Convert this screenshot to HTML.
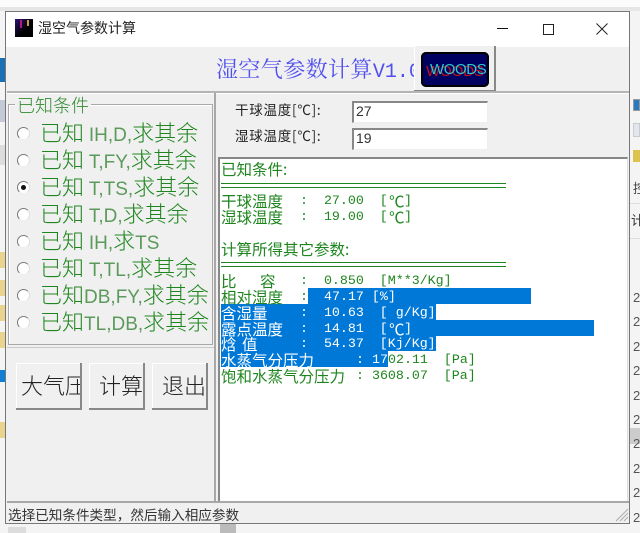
<!DOCTYPE html>
<html><head><meta charset="utf-8"><style>
*{box-sizing:border-box}
html,body{margin:0;padding:0}
body{width:640px;height:533px;position:relative;overflow:hidden;background:#f4f4f4;font-family:"Liberation Sans","Noto Sans CJK SC",sans-serif}
.a{position:absolute}
.t{position:absolute;white-space:pre;line-height:1}
.r{position:absolute;left:17px;width:13px;height:13px;border-radius:50%;background:#fff;border:1.5px solid;border-color:#777 #ddd #eee #777}
.rl{position:absolute;left:40px;white-space:pre;height:24px;line-height:24px;margin-top:-1px;color:#1f861f;font-size:22px;font-family:"Noto Sans CJK SC",sans-serif;font-weight:300}
.rl i{font-style:normal;font-family:"Liberation Sans",sans-serif;font-size:19px;color:#5c9a5c}
.btn{position:absolute;top:363px;height:47px;background:#f0f0f0;border-right:2px solid #888;border-bottom:2px solid #888;box-shadow:inset 1px 1px 0 #fff;overflow:hidden;color:#222;font-size:22px;font-family:"Noto Sans CJK SC",sans-serif;font-weight:300;line-height:45px;white-space:pre}
.l{position:absolute;color:#1f861f;font-size:15.5px;line-height:16px;white-space:pre;font-family:"Noto Sans CJK SC",sans-serif;font-weight:400}
.m{position:absolute;font-family:"Liberation Mono",monospace;font-size:13.3px;line-height:16px;white-space:pre;color:#1f861f}
.w{color:#fff}
.sel{position:absolute;background:#0078d7}
.in{position:absolute;left:352px;width:136px;height:22px;background:#fff;border-top:2px solid #888;border-left:2px solid #888;border-right:1px solid #eee;border-bottom:1px solid #eee;font-size:14px;color:#333;line-height:17px;padding-left:2px}
</style></head><body>
<div class="a" style="left:0;top:0;width:640px;height:11px;background:#fbfbfb"></div>
<div class="a" style="left:0;top:7px;width:640px;height:4px;background:#e6e6e6"></div>
<div class="a" style="left:0;top:58px;width:6px;height:24px;background:#1a6fb5"></div>
<div class="a" style="left:0;top:100px;width:6px;height:22px;background:#c3c9d6"></div>
<div class="a" style="left:0;top:145px;width:6px;height:20px;background:#ddd"></div>
<div class="a" style="left:0;top:252px;width:6px;height:16px;background:#e8d48f"></div>
<div class="a" style="left:0;top:280px;width:6px;height:16px;background:#e8d48f"></div>
<div class="a" style="left:0;top:305px;width:6px;height:16px;background:#e8d48f"></div>
<div class="a" style="left:0;top:332px;width:6px;height:16px;background:#e8d48f"></div>
<div class="a" style="left:0;top:370px;width:6px;height:12px;background:#0f7fd6"></div>
<div class="a" style="left:0;top:422px;width:6px;height:16px;background:#e8d48f"></div>
<div class="a" style="left:633px;top:99px;width:7px;height:12px;background:#2a7ac0;border:1px solid #999"></div>
<div class="a" style="left:633px;top:123px;width:7px;height:14px;background:#e2e6ee;border:1px solid #ccc"></div>
<div class="a" style="left:633px;top:150px;width:7px;height:12px;background:#dcc24f"></div>
<div class="t" style="left:633px;top:181px;font-size:13px;color:#444;font-family:'Noto Sans CJK SC',sans-serif">控</div>
<div class="t" style="left:631px;top:213px;font-size:13px;color:#333;font-family:'Noto Sans CJK SC',sans-serif">计算</div>
<div class="a" style="left:630px;top:203px;width:10px;height:1px;background:#ddd"></div>
<div class="a" style="left:630px;top:238px;width:10px;height:1px;background:#ddd"></div>
<div class="a" style="left:630px;top:428px;width:10px;height:16px;background:#ccc"></div>
<div class="t" style="left:633px;top:286px;font-size:13px;color:#555;line-height:24.4px;white-space:pre">2
2
2
2
2
2
2
2
2
2</div>
<div class="a" style="left:220px;top:523px;width:16px;height:10px;background:#bbb"></div>
<div class="a" style="left:8px;top:527px;width:18px;height:6px;background:#ddd"></div>

<!-- window -->
<div class="a" style="left:5px;top:11px;width:625px;height:513px;background:#f0f0f0;border:1.5px solid #777;overflow:hidden">
<div class="a" style="left:0;top:0;width:100%;height:35px;background:#fff"></div>
</div>
<div class="a" style="left:15px;top:19px;width:18px;height:18px;background:linear-gradient(135deg,#301070,#000 60%);"></div>
<div class="a" style="left:20px;top:20px;width:2px;height:8px;background:#b01880"></div>
<div class="a" style="left:27px;top:20px;width:2px;height:6px;background:#c8a030"></div>
<div class="t" style="left:38px;top:21px;font-size:14px;color:#222;font-family:'Noto Sans CJK SC',sans-serif">湿空气参数计算</div>
<div class="a" style="left:497px;top:28px;width:11px;height:1px;background:#111"></div>
<div class="a" style="left:543px;top:24px;width:11px;height:11px;border:1px solid #222"></div>
<svg class="a" style="left:596px;top:23px" width="12" height="12" viewBox="0 0 12 12"><path d="M.5.5l11 11M11.5.5l-11 11" stroke="#222" fill="none"/></svg>

<!-- header -->
<div class="t" style="left:216px;top:57px;font-size:22px;letter-spacing:.4px;color:#5050ee;font-family:'Noto Serif CJK SC',serif;width:198px;overflow:hidden;height:26px;line-height:24px">湿空气参数计算<span style="font-family:'Liberation Mono',monospace;font-size:20px;letter-spacing:0">V1.0</span></div>
<div class="a" style="left:414px;top:46px;width:82px;height:46px;background:#f0f0f0;border-right:2px solid #888;border-bottom:2px solid #888;box-shadow:inset 1px 0 0 #fff"></div>
<div class="a" style="left:421px;top:52px;width:68px;height:35px;background:#000060;border-radius:5px;box-shadow:inset 0 0 0 2px #000"></div>
<div class="t" style="left:426px;top:64px;font-size:15px;color:#c01020;letter-spacing:-.1px;width:60px;overflow:hidden">WOODS</div>
<div class="t" style="left:430px;top:62px;font-size:15px;color:#30c8c8;letter-spacing:-.4px;width:56px;overflow:hidden;height:17px">WOODS</div>
<div class="a" style="left:7px;top:91px;width:622px;height:2px;background:#b4b4b4"></div>
<div class="a" style="left:7px;top:93px;width:622px;height:1px;background:#fff"></div>

<!-- left group -->
<div class="a" style="left:8px;top:104px;width:205px;height:241px;border:1px solid #a8a8a8;box-shadow:inset 1px 1px 0 #fff"></div>
<div class="t" style="left:15px;top:95px;font-size:18px;line-height:20px;padding:0 2px;background:#f0f0f0;color:#2f8a2f;font-family:'Noto Sans CJK SC',sans-serif;font-weight:300">已知条件</div>
<div class="r" style="top:127px"></div><div class="rl" style="top:121px">已知 <i>IH,D,</i>求其余</div>
<div class="r" style="top:154px"></div><div class="rl" style="top:148px">已知 <i>T,FY,</i>求其余</div>
<div class="r" style="top:181px"></div><div class="a" style="left:21px;top:185px;width:5px;height:5px;border-radius:50%;background:#111"></div><div class="rl" style="top:175px">已知 <i>T,TS,</i>求其余</div>
<div class="r" style="top:208px"></div><div class="rl" style="top:202px">已知 <i>T,D,</i>求其余</div>
<div class="r" style="top:235px"></div><div class="rl" style="top:229px">已知 <i>IH,</i>求<i>TS</i></div>
<div class="r" style="top:262px"></div><div class="rl" style="top:256px">已知 <i>T,TL,</i>求其余</div>
<div class="r" style="top:289px"></div><div class="rl" style="top:283px">已知<i>DB,FY,</i>求其余</div>
<div class="r" style="top:316px"></div><div class="rl" style="top:310px">已知<i>TL,DB,</i>求其余</div>
<div class="a" style="left:7px;top:347px;width:208px;height:1px;background:#c8c8c8"></div>

<!-- buttons -->
<div class="btn" style="left:16px;width:66px;padding-left:5px">大气压</div>
<div class="btn" style="left:89px;width:56px;padding-left:10px">计算</div>
<div class="btn" style="left:152px;width:56px;padding-left:10px">退出</div>

<div class="a" style="left:214px;top:93px;width:2px;height:408px;background:#a8a8a8"></div>

<!-- right top -->
<div class="t" style="left:235px;top:102px;font-size:13.5px;letter-spacing:.75px;line-height:15px;color:#222;font-family:'Noto Sans CJK SC',sans-serif">干球温度[℃]:</div>
<div class="t" style="left:235px;top:128px;font-size:13.5px;letter-spacing:.75px;line-height:15px;color:#222;font-family:'Noto Sans CJK SC',sans-serif">湿球温度[℃]:</div>
<div class="in" style="top:101px">27</div>
<div class="in" style="top:128px">19</div>

<!-- textbox -->
<div class="a" style="left:218px;top:157px;width:410px;height:344px;background:#fff;border-top:2px solid #888;border-left:2px solid #888;border-right:1px solid #ddd"></div>

<div class="sel" style="left:308px;top:288px;width:223px;height:16px"></div>
<div class="sel" style="left:221px;top:304px;width:215px;height:16px"></div>
<div class="sel" style="left:221px;top:320px;width:373px;height:16px"></div>
<div class="sel" style="left:221px;top:336px;width:215px;height:15px"></div>
<div class="sel" style="left:221px;top:351px;width:167px;height:16px"></div>

<div class="l" style="left:221px;top:161px">已知条件:</div>
<div class="a" style="left:221px;top:183px;width:285px;height:5px;border-top:1.5px solid #1f861f;border-bottom:1.5px solid #1f861f"></div>
<div class="l" style="left:221px;top:193px">干球温度</div><div class="m" style="left:300px;top:193px">:  27.00  [</div><div class="l" style="left:389px;top:193px">℃</div><div class="m" style="left:404px;top:193px">]</div>
<div class="l" style="left:221px;top:209px">湿球温度</div><div class="m" style="left:300px;top:209px">:  19.00  [</div><div class="l" style="left:389px;top:209px">℃</div><div class="m" style="left:404px;top:209px">]</div>
<div class="l" style="left:221px;top:241px">计算所得其它参数:</div>
<div class="a" style="left:221px;top:262px;width:285px;height:5px;border-top:1.5px solid #1f861f;border-bottom:1.5px solid #1f861f"></div>
<div class="l" style="left:221px;top:273px">比</div><div class="l" style="left:260px;top:273px">容</div><div class="m" style="left:300px;top:273px">:  0.850  [M**3/Kg]</div>
<div class="l" style="left:221px;top:289px">相对湿度</div><div class="m" style="left:300px;top:289px">:</div><div class="m w" style="left:324px;top:289px">47.17 [%]</div>
<div class="l w" style="left:221px;top:305px">含湿量</div><div class="m w" style="left:300px;top:305px">:  10.63  [ g/Kg]</div>
<div class="l w" style="left:221px;top:321px">露点温度</div><div class="m w" style="left:300px;top:321px">:  14.81  [</div><div class="l w" style="left:389px;top:321px">℃</div><div class="m w" style="left:404px;top:321px">]</div>
<div class="l w" style="left:221px;top:336px">焓</div><div class="l w" style="left:242px;top:336px">值</div><div class="m w" style="left:300px;top:336px">:  54.37  [Kj/Kg]</div>
<div class="l w" style="left:221px;top:352px">水蒸气分压力</div><div class="m w" style="left:356px;top:352px">: 17</div><div class="m" style="left:388px;top:352px">02.11  [Pa]</div>
<div class="l" style="left:221px;top:368px">饱和水蒸气分压力</div><div class="m" style="left:356px;top:368px">: 3608.07  [Pa]</div>

<!-- status -->
<div class="a" style="left:7px;top:501px;width:622px;height:2px;background:#a8a8a8"></div>
<div class="t" style="left:8px;top:508px;font-size:13.6px;color:#333;font-family:'Noto Sans CJK SC',sans-serif">选择已知条件类型，然后输入相应参数</div>
<svg class="a" style="left:615px;top:508px" width="14" height="14"><path d="M13 1L1 13M13 5L5 13M13 9L9 13" stroke="#aaa"/></svg>
</body></html>
